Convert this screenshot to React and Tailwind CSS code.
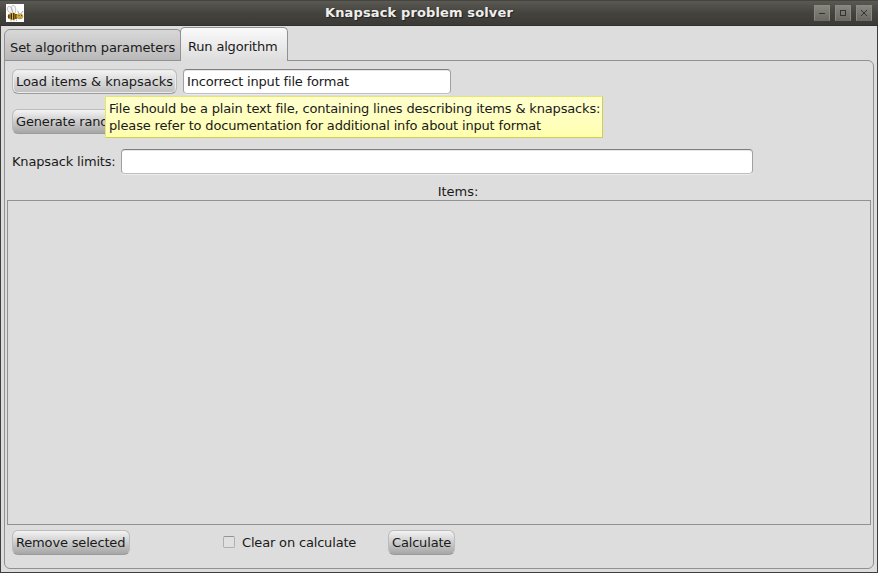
import React from "react";

function Button({ children, className = "", tone = "to-[#a6a6a6]" }) {
  return (
    <button
      className={`h-[25px] shrink-0 whitespace-nowrap rounded-[6px] border border-[#bcbcbc] border-b-[#9b9b9b] bg-linear-to-b from-[#f4f4f4] ${tone} pl-[3px] text-left leading-[23px] ${className}`}
    >
      {children}
    </button>
  );
}

function Field({ children, className = "" }) {
  return (
    <div
      className={`h-[25px] shrink-0 whitespace-nowrap rounded-[4px] border border-[#a0a0a0] border-t-[#7f7f7f] border-b-[#bebebe] bg-white pl-[3px] leading-[23px] shadow-[0_1px_0_#ececec,inset_0_1px_0_#e6e6e6] ${className}`}
    >
      {children}
    </div>
  );
}

function WindowButton({ children }) {
  return (
    <button className="flex h-4 w-4 items-center justify-center border border-[#8a8982] border-b-[#6c6b66] bg-linear-to-b from-[#87867f] to-[#6a6963]">
      <svg width="14" height="14" viewBox="0 0 14 14" fill="none" stroke="#34332f" shapeRendering="crispEdges">
        {children}
      </svg>
    </button>
  );
}

function Bee() {
  return (
    <svg width="18" height="18" viewBox="0 0 18 18" className="bg-white">
      <path d="M6.5 9.5C2.5 9 .3 5.5 1.8 3.2S6 2.8 7 9C4.6 5 5 1.6 7.2 1.4S10.6 5 9 9.2" fill="#f6f6f6" stroke="#b4b4b4" strokeWidth=".9" />
      <ellipse cx="6.6" cy="12.4" rx="5" ry="3.5" fill="#e9ae22" />
      <path d="M2.9 10.6v3.8M5.3 9.2v6.4M7.8 9.1v6.6M10 10v5" stroke="#2b2415" strokeWidth="1.3" />
      <ellipse cx="13.8" cy="12.3" rx="3.2" ry="2.6" fill="#ddb23a" stroke="#a8842f" strokeWidth=".6" />
      <path d="M13 9.7L11.6 6.8M15 9.7l2-2.7M12.6 13.6q1.3.9 2.6 0" stroke="#8d8b86" strokeWidth=".8" fill="none" />
      <path d="M12.5 11.7h1M15 11.7h1" stroke="#3b3423" />
      <path d="M5 16v1.3M8 16v1.3M10.5 15.5v1.5" stroke="#99958c" strokeWidth=".7" />
    </svg>
  );
}

export default function App() {
  return (
    <div className="flex h-[573px] w-[878px] flex-col overflow-hidden bg-[#3f3e3a] font-['DejaVu_Sans',sans-serif] text-[13px] tracking-[-0.17px] text-[#1a1a1a]">
      <header className="flex h-[26px] shrink-0 items-center border-t border-b border-t-[#45443f] border-b-[#31302c] bg-linear-to-b from-[#5a5953] via-[#44433e] to-[#3b3a36] pr-[6px] pl-[6px]">
        <Bee />
        <h1 className="-mt-px flex-1 text-center text-[13px] leading-[24px] font-bold tracking-[0.13px] text-[#eeeeec] [text-shadow:1px_1px_1px_#222]">
          Knapsack problem solver
        </h1>
        <div className="flex gap-[5px]">
          <WindowButton><path d="M4 7.5h6" /></WindowButton>
          <WindowButton><path d="M4.5 4.5h5v5h-5z" /></WindowButton>
          <WindowButton>
            <path
              stroke="none"
              fill="#34332f"
              d="M4 4h1v1h-1zM5 5h1v1h-1zM6 6h2v2h-2zM8 5h1v1h-1zM9 4h1v1h-1zM5 8h1v1h-1zM4 9h1v1h-1zM8 8h1v1h-1zM9 9h1v1h-1z"
            />
          </WindowButton>
        </div>
      </header>

      <div className="mx-px mb-px flex min-h-0 flex-1 flex-col bg-[#dddddd] px-[3px] pt-px pb-[3px]">
        <nav className="z-10 -mb-px flex h-[34px] shrink-0 items-end">
          <button className="mr-[-1px] h-[32px] w-[177px] rounded-tl-[6px] rounded-tr-[4px] border border-[#919191] bg-linear-to-b from-[#d8d8d8] to-[#b9b9b9] pl-[5px] text-left leading-[35px] tracking-[-0.11px] whitespace-nowrap">
            Set algorithm parameters
          </button>
          <button className="relative h-[34px] w-[108px] rounded-t-[5px] border border-b-0 border-[#919191] bg-linear-to-b from-[#fafafa] to-[#dddddd] pl-[7px] text-left leading-[38px] whitespace-nowrap">
            Run algorithm
          </button>
        </nav>

        <main className="flex min-h-0 flex-1 flex-col rounded-[6px] rounded-tl-none border border-[#919191] px-[2px] pt-[8px]">
          <div className="flex gap-[6px] pl-[5px]">
            <Button className="w-[165px] tracking-[-0.05px] shadow-[inset_0_0_0_1px_#ececec]" tone="to-[#bfbfbf]">Load items &amp; knapsacks</Button>
            <Field className="w-[268px]">Incorrect input file format</Field>
          </div>

          <div className="relative mt-[15px] flex pl-[5px]">
            <Button className="w-[165px]">Generate random</Button>
            <div
              role="tooltip"
              className="absolute -top-[13px] left-[98px] h-[42px] w-[498px] border border-[#e6e66a] border-r-[#d0d050] border-b-[#d0d050] bg-linear-to-b from-[#ffffcf] to-[#ffffb0] pt-[3px] pl-[3px] leading-[17px] whitespace-nowrap"
            >
              File should be a plain text file, containing lines describing items &amp; knapsacks:
              <br />
              please refer to documentation for additional info about input format
            </div>
          </div>

          <div className="mt-[15px] flex pl-[5px]">
            <label className="w-[109px] shrink-0 leading-[25px] whitespace-nowrap">Knapsack limits:</label>
            <Field className="w-[632px]" />
          </div>

          <div className="mt-[9px] h-[17px] shrink-0 pl-[38px] text-center leading-[18px] tracking-normal">Items:</div>
          <div className="h-[325px] shrink-0 border border-[#919191]" />

          <div className="mt-[5px] flex items-center pl-[5px]">
            <Button className="w-[118px]">Remove selected</Button>
            <label className="ml-[93px] flex w-[165px] items-center gap-[7px] whitespace-nowrap">
              <span className="-mt-px h-3 w-3 rounded-[2px] border border-[#b0b0b0] border-t-[#929292] bg-[#e0e0e0]" />
              Clear on calculate
            </label>
            <Button className="w-[67px]">Calculate</Button>
          </div>
        </main>
      </div>
    </div>
  );
}
